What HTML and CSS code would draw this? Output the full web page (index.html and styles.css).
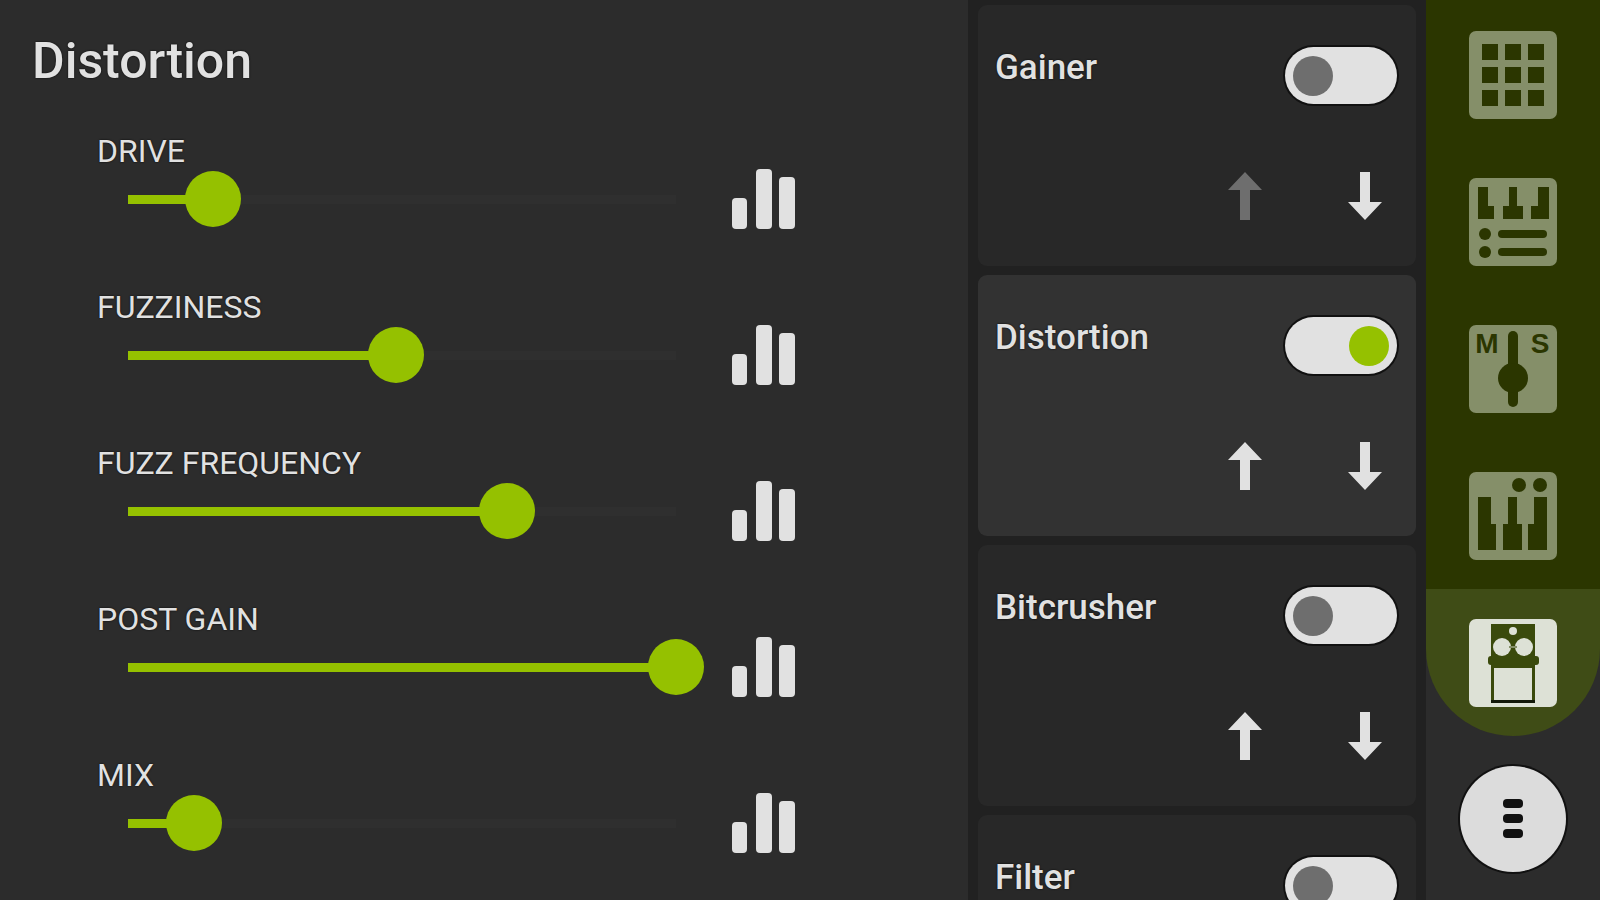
FILE: index.html
```html
<!DOCTYPE html>
<html lang="en">
<head>
  <meta charset="UTF-8" />
  <meta name="viewport" content="width=device-width, initial-scale=1.0" />
  <title>Effects - Distortion</title>
  <link rel="stylesheet" href="styles.css">
</head>
<body>
  <!-- Shared icons -->
  <svg class="sprite" aria-hidden="true">
    <symbol id="icon-bars" viewBox="0 0 64 60">
      <rect x="0" y="29" width="15" height="31" rx="4" />
      <rect x="24" y="0" width="16" height="60" rx="4" />
      <rect x="47" y="8" width="16" height="52" rx="4" />
    </symbol>
    <symbol id="icon-up" viewBox="0 0 48 48">
      <path d="M24 0 L41 18 H29 V48 H19 V18 H7 Z" />
    </symbol>
    <symbol id="icon-down" viewBox="0 0 48 48">
      <path d="M24 48 L41 30 H29 V0 H19 V30 H7 Z" />
    </symbol>
  </svg>

  <div class="app">
    <!-- Parameters of the selected effect -->
    <main class="editor">
      <h1 class="editor__title">Distortion</h1>
      <div class="editor__params">
        <div class="param">
          <label class="param__label" for="drive">DRIVE</label>
          <input class="param__slider" type="range" id="drive" min="0" max="1000" value="156" style="--value: 0.156" />
          <button class="param__automate" aria-label="Automate drive"><svg><use href="#icon-bars" /></svg></button>
        </div>
        <div class="param">
          <label class="param__label" for="fuzziness">FUZZINESS</label>
          <input class="param__slider" type="range" id="fuzziness" min="0" max="1000" value="489" style="--value: 0.489" />
          <button class="param__automate" aria-label="Automate fuzziness"><svg><use href="#icon-bars" /></svg></button>
        </div>
        <div class="param">
          <label class="param__label" for="fuzz-frequency">FUZZ FREQUENCY</label>
          <input class="param__slider" type="range" id="fuzz-frequency" min="0" max="1000" value="691" style="--value: 0.691" />
          <button class="param__automate" aria-label="Automate fuzz frequency"><svg><use href="#icon-bars" /></svg></button>
        </div>
        <div class="param">
          <label class="param__label" for="post-gain">POST GAIN</label>
          <input class="param__slider" type="range" id="post-gain" min="0" max="1000" value="1000" style="--value: 1" />
          <button class="param__automate" aria-label="Automate post gain"><svg><use href="#icon-bars" /></svg></button>
        </div>
        <div class="param">
          <label class="param__label" for="mix">MIX</label>
          <input class="param__slider" type="range" id="mix" min="0" max="1000" value="121" style="--value: 0.121" />
          <button class="param__automate" aria-label="Automate mix"><svg><use href="#icon-bars" /></svg></button>
        </div>
      </div>
    </main>

    <!-- Effect chain -->
    <section class="chain">
      <div class="effect">
        <div class="effect__head">
          <label class="effect__name" for="gainer-on">Gainer</label>
          <input class="toggle" type="checkbox" id="gainer-on" />
        </div>
        <div class="effect__order">
          <button class="arrow" aria-label="Move up" disabled><svg><use href="#icon-up" /></svg></button>
          <button class="arrow" aria-label="Move down"><svg><use href="#icon-down" /></svg></button>
        </div>
      </div>
      <div class="effect effect--selected">
        <div class="effect__head">
          <label class="effect__name" for="distortion-on">Distortion</label>
          <input class="toggle" type="checkbox" id="distortion-on" checked />
        </div>
        <div class="effect__order">
          <button class="arrow" aria-label="Move up"><svg><use href="#icon-up" /></svg></button>
          <button class="arrow" aria-label="Move down"><svg><use href="#icon-down" /></svg></button>
        </div>
      </div>
      <div class="effect">
        <div class="effect__head">
          <label class="effect__name" for="bitcrusher-on">Bitcrusher</label>
          <input class="toggle" type="checkbox" id="bitcrusher-on" />
        </div>
        <div class="effect__order">
          <button class="arrow" aria-label="Move up"><svg><use href="#icon-up" /></svg></button>
          <button class="arrow" aria-label="Move down"><svg><use href="#icon-down" /></svg></button>
        </div>
      </div>
      <div class="effect">
        <div class="effect__head">
          <label class="effect__name" for="filter-on">Filter</label>
          <input class="toggle" type="checkbox" id="filter-on" />
        </div>
        <div class="effect__order">
          <button class="arrow" aria-label="Move up"><svg><use href="#icon-up" /></svg></button>
          <button class="arrow" aria-label="Move down"><svg><use href="#icon-down" /></svg></button>
        </div>
      </div>
    </section>

    <!-- Main navigation -->
    <nav class="nav">
      <button class="nav__item" aria-label="Pads">
        <svg class="nav__icon" viewBox="0 0 88 88">
          <rect class="plate" width="88" height="88" rx="7" />
          <path class="ink" d="M13 13h16v16h-16z M36 13h16v16h-16z M59 13h16v16h-16z M13 36h16v16h-16z M36 36h16v16h-16z M59 36h16v16h-16z M13 59h16v16h-16z M36 59h16v16h-16z M59 59h16v16h-16z" />
        </svg>
      </button>
      <button class="nav__item" aria-label="Sequencer">
        <svg class="nav__icon" viewBox="0 0 88 88">
          <rect class="plate" width="88" height="88" rx="7" />
          <path class="ink" d="M9 9H19V28H25V41H9Z M40 9H48V28H54V41H34V28H40Z M69 9H80V41H62V28H69Z" />
          <circle class="ink" cx="16" cy="56" r="6" />
          <circle class="ink" cx="16" cy="74" r="6" />
          <rect class="ink" x="29" y="52" width="49" height="8" rx="4" />
          <rect class="ink" x="29" y="70" width="49" height="8" rx="4" />
        </svg>
      </button>
      <button class="nav__item" aria-label="Mixer">
        <svg class="nav__icon" viewBox="0 0 88 88">
          <rect class="plate" width="88" height="88" rx="7" />
          <text class="ink nav__letter" x="18" y="28">M</text>
          <text class="ink nav__letter" x="71" y="28">S</text>
          <rect class="ink" x="39" y="6" width="10" height="76" rx="5" />
          <circle class="ink" cx="44" cy="53" r="15" />
        </svg>
      </button>
      <button class="nav__item" aria-label="Keyboard">
        <svg class="nav__icon" viewBox="0 0 88 88">
          <rect class="plate" width="88" height="88" rx="7" />
          <circle class="ink" cx="50" cy="13" r="7" />
          <circle class="ink" cx="71" cy="13" r="7" />
          <path class="ink" d="M9 25H22V52H27V78H9Z M39 25H48V52H53V78H34V52H39Z M65 25H78V78H59V52H65Z" />
        </svg>
      </button>
      <button class="nav__item nav__item--active" aria-label="Effects" aria-current="page">
        <svg class="nav__icon" viewBox="0 0 88 88">
          <rect class="plate" width="88" height="88" rx="7" />
          <rect class="ink" x="22" y="5" width="44" height="79" />
          <rect class="ink" x="19" y="37" width="51" height="9" rx="3" />
          <circle class="plate" cx="44" cy="12" r="4" />
          <circle class="plate" cx="33" cy="28" r="9" />
          <circle class="plate" cx="55" cy="28" r="9" />
          <rect class="link" x="40" y="27" width="8" height="2" />
          <rect class="plate" x="25" y="49" width="38" height="32" />
          <rect class="foot" x="22" y="81" width="44" height="3" />
        </svg>
      </button>
      <button class="nav__menu" aria-label="Menu">
        <svg viewBox="0 0 20 40">
          <rect y="0" width="20" height="9" rx="4" />
          <rect y="15" width="20" height="9" rx="4" />
          <rect y="30" width="20" height="9" rx="4" />
        </svg>
      </button>
    </nav>
  </div>

  <script>
    // Keep the coloured part of each slider in step with its thumb
    document.querySelectorAll(".param__slider").forEach((slider) => {
      slider.addEventListener("input", () => {
        slider.style.setProperty("--value", slider.value / slider.max);
      });
    });
  </script>
</body>
</html>
```

FILE: styles.css
```css
:root {
  --panel: #2c2c2c;
  --light: #e1e1e1;
  --accent: #95c100;
  --green: #2b3600;
}
* {
  box-sizing: border-box;
}
body {
  margin: 0;
  background: var(--panel);
  color: var(--light);
  font-family: Roboto, sans-serif;
  overflow: hidden;
}
button {
  padding: 0;
  border: none;
  background: none;
  cursor: pointer;
}
svg {
  display: block;
}
.sprite {
  display: none;
}
.app {
  display: grid;
  grid-template-columns: 1fr 458px 174px;
  height: 100vh;
}

/* Parameter editor */
.editor {
  padding: 33px 172px 0 32px;
}
.editor__title {
  margin: 0 0 42px;
  font-size: 50px;
  font-weight: 500;
  line-height: 56px;
  text-shadow: 0 0 2px #000;
}
.editor__params {
  display: flex;
  flex-direction: column;
  gap: 60px;
  padding-left: 65px;
}
.param {
  display: grid;
  grid-template-columns: 1fr 64px;
  column-gap: 28px;
  align-items: center;
}
.param__label {
  grid-column: 1 / -1;
  font-size: 32px;
  line-height: 40px;
  text-shadow: 0 0 2px #000;
}
.param__slider {
  -webkit-appearance: none;
  appearance: none;
  height: 56px;
  margin: 0 0 0 3px;
  background:
    linear-gradient(var(--accent), var(--accent)) 28px center / calc((100% - 56px) * var(--value)) 9px no-repeat,
    linear-gradient(#2f2f2f, #2f2f2f) 28px center / calc(100% - 56px) 9px no-repeat;
  cursor: pointer;
}
.param__slider::-webkit-slider-thumb {
  -webkit-appearance: none;
  width: 56px;
  height: 56px;
  border-radius: 50%;
  background: var(--accent);
}
.param__automate svg {
  width: 64px;
  height: 60px;
  margin: -2px 0;
  fill: var(--light);
}

/* Effect chain */
.chain {
  display: flex;
  flex-direction: column;
  gap: 9px;
  padding: 5px 10px;
  background: #212121;
  overflow: hidden;
}
.effect {
  flex-shrink: 0;
  padding: 42px 19px 46px 17px;
  border-radius: 9px;
  background: #282828;
}
.effect--selected {
  background: #323232;
}
.effect__head {
  display: flex;
  justify-content: space-between;
  align-items: flex-start;
  margin-bottom: 68px;
}
.effect__name {
  font-size: 35px;
  font-weight: 500;
  line-height: 42px;
  text-shadow: 0 0 2px #000;
}
.toggle {
  -webkit-appearance: none;
  appearance: none;
  display: flex;
  align-items: center;
  width: 112px;
  height: 57px;
  margin: 0;
  padding: 0 8px;
  border-radius: 29px;
  background: var(--light);
  box-shadow: 0 0 0 2px #111;
  cursor: pointer;
}
.toggle::before {
  content: '';
  width: 40px;
  height: 40px;
  border-radius: 50%;
  background: #6e6e6e;
}
.toggle:checked {
  justify-content: flex-end;
}
.toggle:checked::before {
  background: var(--accent);
}
.effect__order {
  display: flex;
  justify-content: flex-end;
  gap: 72px;
  padding-right: 8px;
}
.arrow svg {
  width: 48px;
  height: 48px;
  fill: var(--light);
}
.arrow:disabled svg {
  fill: #6e6e6e;
}

/* Navigation */
.nav {
  display: flex;
  flex-direction: column;
  align-items: center;
  border-top: 1px solid var(--green);
}
.nav__item {
  display: flex;
  flex-shrink: 0;
  justify-content: center;
  align-items: center;
  width: 100%;
  height: 147px;
  background: var(--green);
}
.nav__item--active {
  border-radius: 0 0 87px 87px;
  background: #3f4c16;
}
.nav__icon {
  width: 88px;
  height: 88px;
}
.nav__letter {
  font: bold 28px "Liberation Sans", sans-serif;
  text-anchor: middle;
}
.plate {
  fill: #858f69;
}
.ink {
  fill: var(--green);
}
.nav__item--active .plate {
  fill: #dde1d6;
}
.nav__item--active .ink {
  fill: #3a4a0c;
}
.link {
  fill: #858f69;
}
.foot {
  fill: #12180a;
}
.nav__menu {
  display: flex;
  justify-content: center;
  align-items: center;
  width: 106px;
  height: 106px;
  margin-top: 30px;
  border-radius: 50%;
  background: #dcdcdc;
  box-shadow: 0 0 0 2px #111;
}
.nav__menu svg {
  width: 20px;
  height: 40px;
  fill: #111;
}
```
